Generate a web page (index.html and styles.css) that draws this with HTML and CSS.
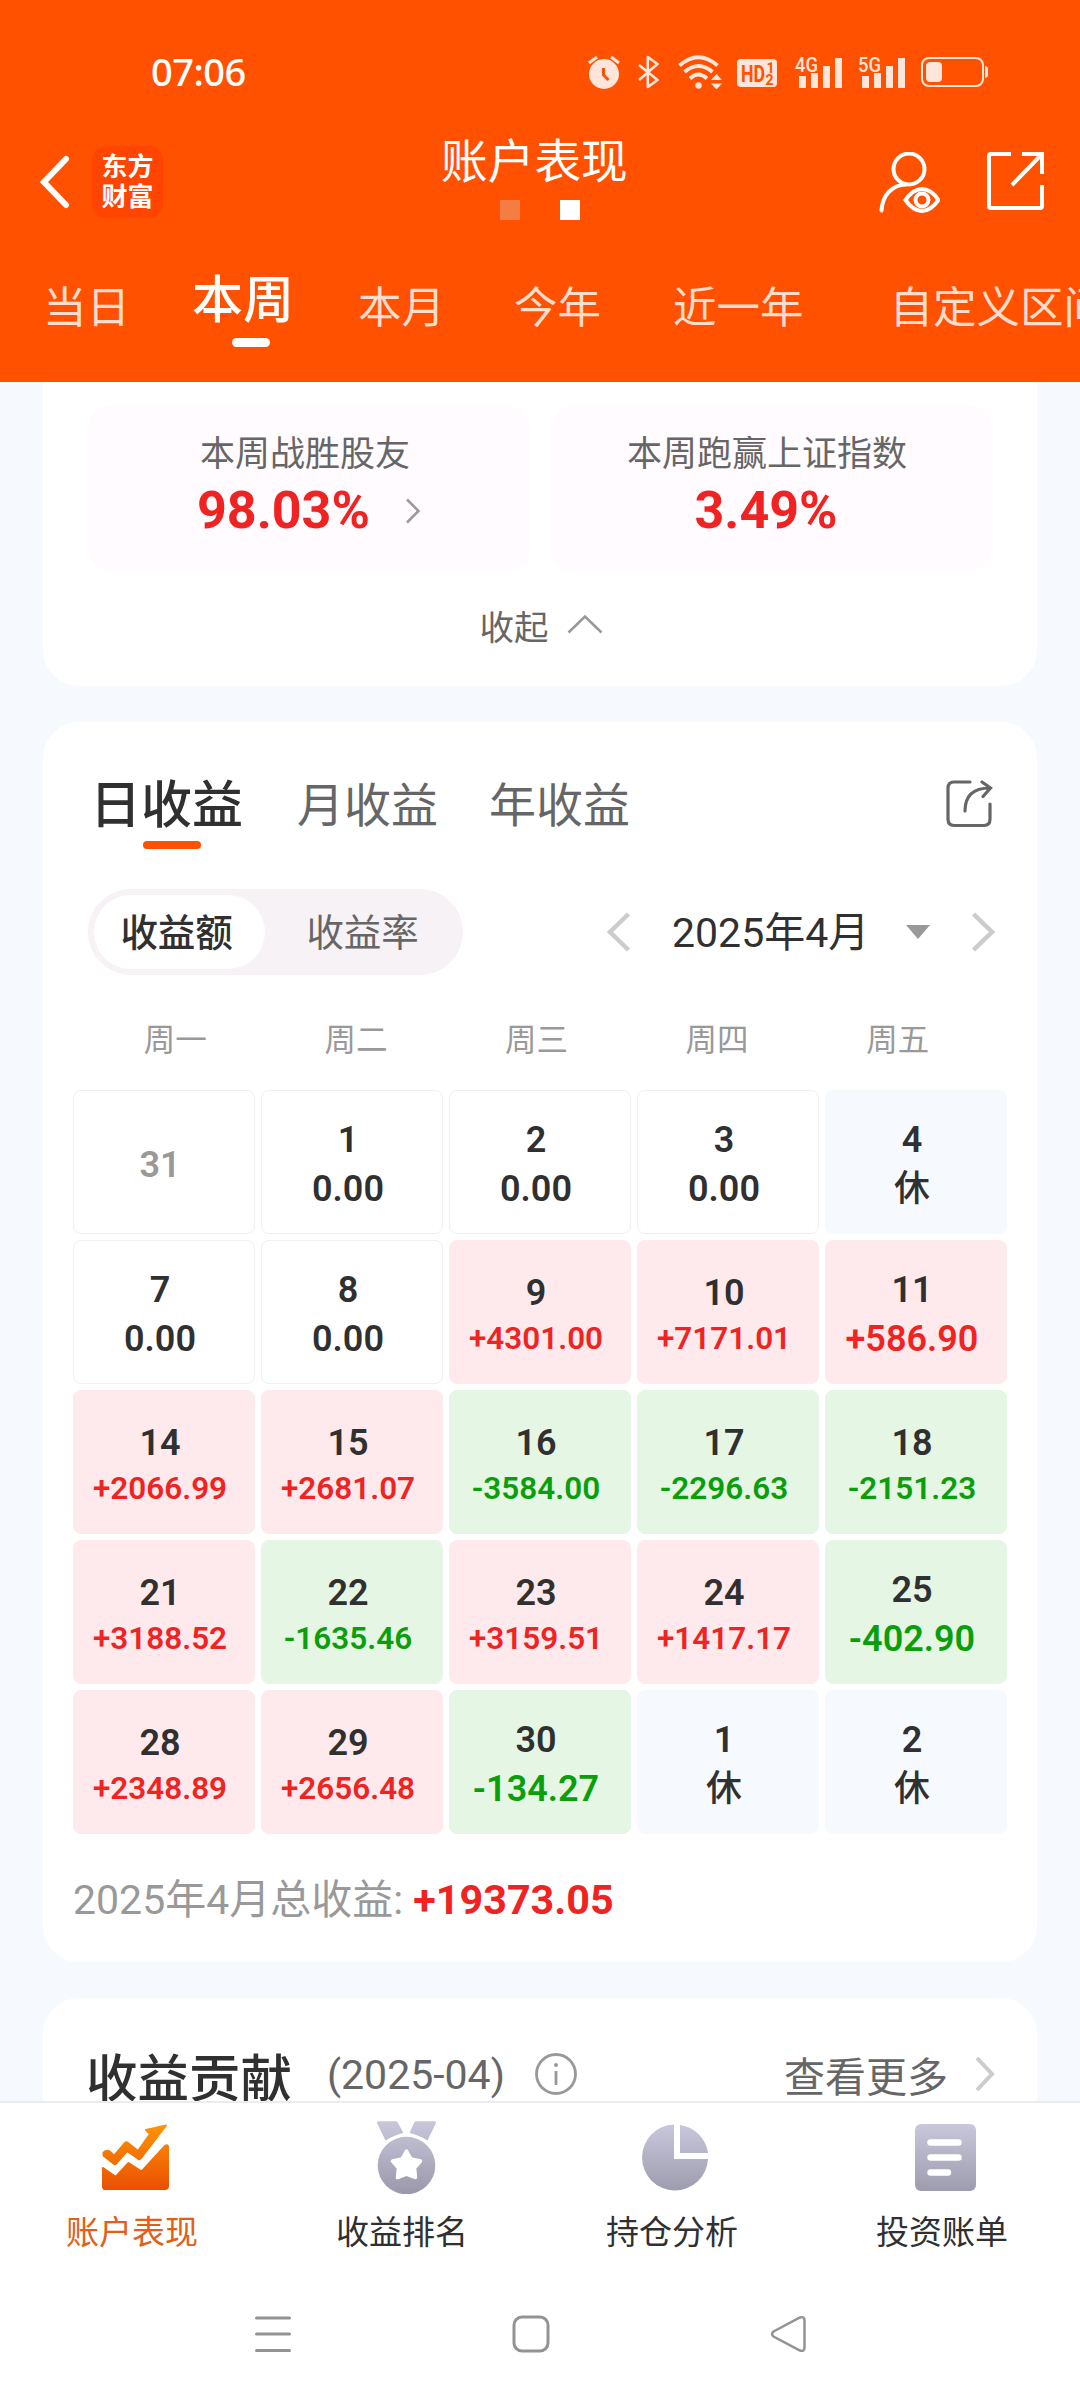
FILE: index.html
```html
<!DOCTYPE html>
<html lang="zh-CN">
<head>
    <meta charset="UTF-8">
    <meta name="viewport" content="width=device-width, initial-scale=1.0">
    <title>账户表现</title>
    <link rel="stylesheet" href="styles.css">
</head>
<body>
    <div class="phone">
        <header class="header">
            <div class="status-bar">
                <span class="time">07:06</span>
                <div class="status-icons">
                    <svg class="alarm" width="32" height="34" viewBox="0 0 32 34">
                        <circle cx="16" cy="19" r="15" fill="#ffe5da"/>
                        <path d="M1 8L9 2M31 8L23 2" stroke="#ffe5da" stroke-width="3"/>
                        <path d="M15.500 13v7l5 5" fill="none" stroke="#ff5100" stroke-width="3"/>
                    </svg>
                    <svg class="bluetooth" width="21" height="34" viewBox="0 0 21 34">
                        <path d="M1 10L19.500 25 9.800 32V2L19.500 9 1 25" fill="none" stroke="#ffe5da" stroke-width="2.600" stroke-linejoin="round"/>
                    </svg>
                    <svg class="wifi" width="44" height="34" viewBox="0 0 44 34">
                        <path d="M1.500 10.500Q20.500 -6 39.500 10.500M6.500 17Q20.500 5 34.500 17M12 23.500Q20.500 15.500 29 23.500" fill="none" stroke="#ffe5da" stroke-width="3.800"/>
                        <circle cx="20.500" cy="30.500" r="3.200" fill="#ffe5da"/>
                        <path d="M33 25l5.500-6 5.500 6zM33 28.500l5.500 6 5.500-6z" fill="#ffe5da"/>
                    </svg>
                    <svg class="hd" width="40" height="28" viewBox="0 0 40 28">
                        <rect width="40" height="28" rx="4" fill="#ffe5da"/>
                        <text x="4" y="22.500" font-size="23" textLength="24" lengthAdjust="spacingAndGlyphs">HD</text>
                        <text x="29.500" y="13.500" font-size="14">1</text>
                        <text x="28.500" y="25.500" font-size="14">2</text>
                    </svg>
                    <svg class="signal" width="48" height="34" viewBox="0 0 48 34">
                        <text x="0" y="16.500" font-size="21" textLength="23" lengthAdjust="spacingAndGlyphs">4G</text>
                        <path d="M4 21h7v12H4zM16 18h7v15h-7zM28 11h7v22h-7zM40 3h7v30h-7z" fill="#ffe5da"/>
                    </svg>
                    <svg class="signal" width="48" height="34" viewBox="0 0 48 34">
                        <text x="0" y="16.500" font-size="21" textLength="23" lengthAdjust="spacingAndGlyphs">5G</text>
                        <path d="M4 21h7v12H4zM16 18h7v15h-7zM28 11h7v22h-7zM40 3h7v30h-7z" fill="#ffe5da"/>
                    </svg>
                    <svg class="battery" width="67" height="30" viewBox="0 0 67 30">
                        <rect x="1" y="1" width="61" height="28" rx="7" fill="none" stroke="#ffe5da" stroke-width="2"/>
                        <rect x="5" y="5" width="16" height="20" rx="4" fill="#ffe5da"/>
                        <path d="M64 9q3 0 3 3v6q0 3-3 3z" fill="#ffe5da"/>
                    </svg>
                </div>
            </div>

            <div class="title-bar">
                <div class="title-left">
                    <svg width="30" height="54" viewBox="0 0 30 54">
                        <path d="M26 4L4 27 26 50" fill="none" stroke="#fff" stroke-width="6" stroke-linecap="round" stroke-linejoin="miter"/>
                    </svg>
                    <div class="logo">东方<br>财富</div>
                </div>
                <div class="title-center">
                    <h1>账户表现</h1>
                    <div class="dots"><i></i><i class="on"></i></div>
                </div>
                <div class="title-right">
                    <svg width="61" height="61" viewBox="0 0 61 61" fill="none" stroke="#fff" stroke-width="4" stroke-linecap="round">
                        <circle cx="30" cy="17" r="15.500"/>
                        <path d="M27 32.500C13 33 3.500 43 2.500 58.500"/>
                        <path d="M26.500 48Q34 37 43 37T59.500 48Q52 59 43 59T26.500 48z"/>
                        <circle cx="43" cy="48" r="6.500"/>
                    </svg>
                    <svg width="58" height="58" viewBox="0 0 58 58" fill="none" stroke="#fff" stroke-width="4">
                        <path d="M24 2H4Q2 2 2 4V54Q2 56 4 56H53Q55 56 55 54V33M35 2H55V22M55 2L25 33"/>
                    </svg>
                </div>
            </div>

            <nav class="periods">
                <span>当日</span>
                <span class="active">本周</span>
                <span>本月</span>
                <span>今年</span>
                <span>近一年</span>
                <span>自定义区间</span>
            </nav>
        </header>

        <main class="content">
            <section class="card summary">
                <div class="stats">
                    <div class="stat">
                        <div class="stat-label">本周战胜股友</div>
                        <div class="stat-value">98.03%
                            <svg width="16" height="26" viewBox="0 0 16 26"><path d="M2 1.500L13.500 13 2 24.500" fill="none" stroke="#999" stroke-width="2.500"/></svg>
                        </div>
                    </div>
                    <div class="stat">
                        <div class="stat-label">本周跑赢上证指数</div>
                        <div class="stat-value">3.49%</div>
                    </div>
                </div>
                <div class="collapse">收起
                    <svg width="36" height="20" viewBox="0 0 36 20"><path d="M1.500 18.500L18 2.500 34.500 18.500" fill="none" stroke="#999" stroke-width="2.500"/></svg>
                </div>
            </section>

            <section class="card earnings">
                <div class="earn-tabs">
                    <span class="active">日收益</span>
                    <span>月收益</span>
                    <span>年收益</span>
                    <svg width="47" height="48" viewBox="0 0 47 48" fill="none" stroke="#666" stroke-width="3.200" stroke-linecap="round">
                        <path d="M24 2H8Q2 2 2 8V39Q2 45.500 8 45.500H38Q44 45.500 44 39V24"/>
                        <path d="M19 31Q19 8 44 8M36 2L44.500 8 37 16.500"/>
                    </svg>
                </div>

                <div class="filter">
                    <div class="segment">
                        <span class="active">收益额</span>
                        <span>收益率</span>
                    </div>
                    <div class="month">
                        <svg width="24" height="40" viewBox="0 0 24 40"><path d="M21.500 2L3 20 21.500 38" fill="none" stroke="#ccc" stroke-width="4.500"/></svg>
                        <span class="month-text">2025年4月</span>
                        <svg class="down" width="24" height="14" viewBox="0 0 24 14"><path d="M0 0H24L12 14z" fill="#999"/></svg>
                        <svg width="24" height="40" viewBox="0 0 24 40"><path d="M2.500 2L21 20 2.500 38" fill="none" stroke="#ccc" stroke-width="4.500"/></svg>
                    </div>
                </div>

                <div class="weekdays">
                    <span>周一</span><span>周二</span><span>周三</span><span>周四</span><span>周五</span>
                </div>

                <div class="calendar">
                    <div class="day muted"><b>31</b></div>
                    <div class="day"><b>1</b><em>0.00</em></div>
                    <div class="day"><b>2</b><em>0.00</em></div>
                    <div class="day"><b>3</b><em>0.00</em></div>
                    <div class="day rest"><b>4</b><em>休</em></div>

                    <div class="day"><b>7</b><em>0.00</em></div>
                    <div class="day"><b>8</b><em>0.00</em></div>
                    <div class="day up small"><b>9</b><em>+4301.00</em></div>
                    <div class="day up small"><b>10</b><em>+7171.01</em></div>
                    <div class="day up"><b>11</b><em>+586.90</em></div>

                    <div class="day up small"><b>14</b><em>+2066.99</em></div>
                    <div class="day up small"><b>15</b><em>+2681.07</em></div>
                    <div class="day down small"><b>16</b><em>-3584.00</em></div>
                    <div class="day down small"><b>17</b><em>-2296.63</em></div>
                    <div class="day down small"><b>18</b><em>-2151.23</em></div>

                    <div class="day up small"><b>21</b><em>+3188.52</em></div>
                    <div class="day down small"><b>22</b><em>-1635.46</em></div>
                    <div class="day up small"><b>23</b><em>+3159.51</em></div>
                    <div class="day up small"><b>24</b><em>+1417.17</em></div>
                    <div class="day down"><b>25</b><em>-402.90</em></div>

                    <div class="day up small"><b>28</b><em>+2348.89</em></div>
                    <div class="day up small"><b>29</b><em>+2656.48</em></div>
                    <div class="day down"><b>30</b><em>-134.27</em></div>
                    <div class="day rest"><b>1</b><em>休</em></div>
                    <div class="day rest"><b>2</b><em>休</em></div>
                </div>

                <div class="total">2025年4月总收益: <strong>+19373.05</strong></div>
            </section>

            <section class="card contribution">
                <h2>收益贡献</h2>
                <span class="range">(2025-04)</span>
                <svg class="info" width="42" height="42" viewBox="0 0 42 42">
                    <circle cx="21" cy="21" r="19.500" fill="none" stroke="#999" stroke-width="2.800"/>
                    <path d="M21 18V32" stroke="#999" stroke-width="2.800"/>
                    <circle cx="21" cy="12" r="2" fill="#999"/>
                </svg>
                <span class="more">查看更多</span>
                <svg width="20" height="36" viewBox="0 0 20 36"><path d="M2 2L17 18 2 34" fill="none" stroke="#ccc" stroke-width="4"/></svg>
            </section>
        </main>

        <nav class="tabbar">
            <div class="tab active">
                <svg width="67" height="66" viewBox="0 0 67 66">
                    <defs>
                        <linearGradient id="orange" gradientUnits="userSpaceOnUse" x1="0" y1="0" x2="0" y2="66"><stop offset="0" stop-color="#ff9505"/><stop offset="1" stop-color="#ea4f00"/></linearGradient>
                    </defs>
                    <g fill="url(#orange)" stroke="url(#orange)" stroke-width="2" stroke-linejoin="round">
                        <path d="M4.500 27Q7 26 12 32L23 19Q24.500 17.500 26 19L36 27 48 10 44 6 64 1.500 39 34Q37.500 36 36 34.500L25 27 14 39.500Q12.500 41 11 39L2 32Q0 28 4.500 27z"/>
                        <path d="M1 44L12.500 52Q14 53 15 51.500L26.500 39 38 46.500Q39.500 47.500 41 46L63 22Q66 20 66 23V62Q66 65 63 65H3Q1 65 1 62z"/>
                    </g>
                </svg>
                <span>账户表现</span>
            </div>
            <div class="tab">
                <svg class="medal" width="59" height="73" viewBox="0 0 59 73">
                    <defs>
                        <linearGradient id="gray" gradientUnits="userSpaceOnUse" x1="0" y1="0" x2="0" y2="72"><stop offset="0" stop-color="#c9c7db"/><stop offset="1" stop-color="#9a98aa"/></linearGradient>
                    </defs>
                    <path d="M1 .300H20L26.500 12Q17 14 8.500 19.500L0 2Q0 .300 1 .300zM58 .300H39Q37.500 .300 37 2L32.500 12Q42 14 50.500 19.500L59 2Q59 .300 58 .300z" fill="url(#gray)"/>
                    <circle cx="29.500" cy="44.500" r="28.800" fill="url(#gray)"/>
                    <path d="M29.500 30L34 38 43.500 40 37.500 47 38.500 56.500 29.500 53 20.500 56.500 21.500 47 15.500 40 25 38z" fill="#fff" stroke="#fff" stroke-width="3.500" stroke-linejoin="round"/>
                </svg>
                <span>收益排名</span>
            </div>
            <div class="tab">
                <svg width="67" height="67" viewBox="0 0 67 67">
                    <path d="M32 .500A33 33 0 1 0 66 35H32zM38 1A33 33 0 0 1 66 29H38z" fill="url(#gray)"/>
                </svg>
                <span>持仓分析</span>
            </div>
            <div class="tab">
                <svg width="61" height="67" viewBox="0 0 61 67">
                    <rect width="61" height="67" rx="6" fill="url(#gray)"/>
                    <path d="M15.500 18.500H43.500M15.500 33.500H43.500M15.500 48.500H33" stroke="#fff" stroke-width="6.500" stroke-linecap="round"/>
                </svg>
                <span>投资账单</span>
            </div>
        </nav>

        <div class="sysbar">
            <svg width="38" height="38" viewBox="0 0 38 38" stroke="#939393" stroke-width="3" stroke-linecap="round"><path d="M2.500 3H35.500M2.500 19H35.500M2.500 35.500H35.500"/></svg>
            <svg width="38" height="38" viewBox="0 0 38 38" fill="none" stroke="#939393" stroke-width="3"><rect x="2" y="2" width="34" height="34" rx="8"/></svg>
            <svg width="38" height="38" viewBox="0 0 38 38" fill="none" stroke="#939393" stroke-width="2.500"><path d="M3.500 16.500L30 2.500Q34.500 1 34.500 5.500V32.500Q34.500 37 30 35.500L3.500 21.500Q.500 19 3.500 16.500z"/></svg>
        </div>
    </div>
</body>
</html>
```

FILE: styles.css
```css
:root {
    --orange: #ff5100;
    --red: #f02323;
    --green: #0a9f0a;
    --dark: #303030;
    --gray: #666;
    --light: #999;
}
* {
    box-sizing: border-box;
}
body {
    margin: 0;
    font-family: Roboto, "Noto Sans CJK SC", sans-serif;
    color: var(--dark);
    background: #fff;
}
svg {
    display: block;
    flex: none;
}
.phone {
    width: 1080px;
    height: 2400px;
    display: flex;
    flex-direction: column;
    overflow: hidden;
}

/* header */
.header {
    height: 382px;
    flex: none;
    background: var(--orange);
    color: #fff;
    overflow: hidden;
}
.status-bar {
    height: 134px;
    padding: 54px 92px 0 151px;
    display: flex;
    justify-content: space-between;
}
.time {
    margin-top: -2px;
    font-size: 38px;
    line-height: 38px;
    font-family: "Noto Sans", sans-serif;
    font-weight: 500;
    letter-spacing: -0.5px;
}
.status-icons {
    display: flex;
    align-items: center;
    height: 35px;
}
.status-icons text {
    font-family: Roboto, sans-serif;
    font-weight: 700;
}
.hd text {
    fill: var(--orange);
}
.signal text {
    fill: #ffe5da;
    font-weight: 500;
}
.bluetooth {
    margin-left: 18px;
}
.wifi {
    margin-left: 19px;
}
.hd {
    margin-left: 15px;
    margin-top: 3px;
}
.signal {
    margin-left: 18px;
    overflow: visible;
}
.signal + .signal {
    margin-left: 15px;
}
.battery {
    margin-left: 15px;
}
.title-bar {
    height: 116px;
    display: grid;
    grid-template-columns: 441px 187px 1fr;
}
.title-left {
    display: flex;
    padding: 12px 0 0 40px;
    gap: 22px;
}
.title-left svg {
    margin-top: 9px;
}
.logo {
    width: 71px;
    height: 72px;
    border-radius: 14px;
    background: #ff4500;
    font-size: 26px;
    line-height: 30px;
    font-weight: 700;
    text-align: center;
    padding-top: 6px;
}
.title-center h1 {
    margin: 0;
    padding-top: 1px;
    font-size: 46.7px;
    line-height: 54px;
    font-weight: 400;
    white-space: nowrap;
}
.dots {
    display: flex;
    gap: 40px;
    padding: 11px 0 0 59px;
}
.dots i {
    width: 20px;
    height: 20px;
    background: #f47d44;
}
.dots .on {
    background: #fff;
}
.title-right {
    display: flex;
    gap: 47px;
    padding: 18px 0 0 251px;
}
.periods {
    display: flex;
    align-items: flex-start;
    padding-left: 43px;
    font-size: 43.5px;
    line-height: 60px;
    color: #ffdccc;
    white-space: nowrap;
}
.periods span {
    margin: 29px 66px 0 0;
    flex: none;
}
.periods .active {
    margin: 21px 64px 0 -4px;
    font-size: 51px;
    font-weight: 500;
    color: #fff;
}
.periods .active::after {
    content: "";
    display: block;
    width: 38px;
    height: 9px;
    border-radius: 5px;
    background: #fff;
    margin: 7px 0 0 40px;
}
.periods span:nth-child(3) {
    margin-right: 69px;
}
.periods span:nth-child(4) {
    margin-right: 72px;
}
.periods span:nth-child(5) {
    margin-right: 86px;
}

/* cards */
.content {
    flex: none;
    height: 1719px;
    padding: 0 43px;
    background: #f6faff;
    overflow: hidden;
}
.card {
    background: #fff;
    border-radius: 36px;
    margin-bottom: 36px;
}
.summary {
    height: 304px;
    padding: 23px 45px 0;
    border-radius: 0 0 36px 36px;
}
.stats {
    display: grid;
    grid-template-columns: 442px 441px;
    gap: 21px;
}
.stat {
    height: 167px;
    border-radius: 24px;
    background: #fffbff;
    text-align: center;
    padding-top: 25px;
}
.stat-label {
    font-size: 35px;
    line-height: 50px;
    color: var(--gray);
    padding-right: 8px;
}
.stat:nth-child(2) .stat-label {
    padding-right: 9px;
}
.stat:nth-child(2) .stat-value {
    padding-right: 11px;
}
.stat-value {
    display: flex;
    justify-content: center;
    align-items: center;
    gap: 35px;
    font-size: 52px;
    line-height: 62px;
    font-weight: 700;
    color: var(--red);
}
.stat:first-child .stat-value {
    justify-content: flex-start;
    padding-left: 109px;
}
.collapse {
    display: flex;
    justify-content: center;
    align-items: center;
    gap: 18px;
    margin: 31px 0 0 2px;
    font-size: 34.5px;
    line-height: 50px;
    color: var(--gray);
}
.collapse svg {
    margin-top: -9px;
}

/* earnings calendar */
.earnings {
    height: 1240px;
    padding: 0 30px;
}
.earn-tabs {
    display: flex;
    height: 167px;
    padding: 54px 0 0 17px;
    font-size: 47px;
    line-height: 60px;
    color: var(--gray);
}
.earn-tabs span {
    margin-right: 51px;
}
.earn-tabs .active {
    margin-right: 54px;
    font-size: 51px;
    font-weight: 500;
    color: var(--dark);
}
.earn-tabs .active::after {
    content: "";
    display: block;
    width: 58px;
    height: 8px;
    border-radius: 4px;
    background: var(--orange);
    margin: 5px 0 0 53px;
}
.earn-tabs svg {
    margin: 4px 14px 0 auto;
}
.filter {
    display: flex;
    justify-content: space-between;
    align-items: center;
    padding: 0 12px 0 15px;
}
.segment {
    display: flex;
    width: 375px;
    height: 86px;
    padding: 6px;
    border-radius: 43px;
    background: #f6f2f6;
    font-size: 37.5px;
    line-height: 77px;
    color: var(--gray);
}
.segment span {
    width: 175px;
    text-align: center;
}
.segment span:last-child {
    width: 196px;
    padding-left: 3px;
}
.segment .active {
    padding-right: 6px;
    border-radius: 37px;
    background: #fff;
    color: var(--dark);
    font-weight: 500;
}
.month {
    display: flex;
    align-items: center;
}
.month-text {
    margin-left: 41px;
    padding-top: 2px;
    width: 199px;
    font-size: 41px;
    line-height: 60px;
    white-space: nowrap;
}
.month .down {
    margin: 0 41px 0 35px;
}
.weekdays {
    display: flex;
    padding: 41px 0 25px 12px;
    font-size: 31.5px;
    line-height: 49px;
    color: var(--light);
}
.weekdays span {
    width: 180.6px;
    text-align: center;
}
.calendar {
    display: grid;
    grid-template-columns: repeat(5, 182px);
    grid-auto-rows: 144px;
    gap: 6px;
}
.day {
    display: flex;
    flex-direction: column;
    align-items: center;
    padding: 25px 8px 0 0;
    border-radius: 8px;
    font-size: 36px;
    line-height: 49px;
    font-weight: 600;
    border: 1px solid #efeff1;
}
.day b {
    font-weight: 600;
}
.day em {
    font-style: normal;
}
.day.small {
    padding-top: 28px;
}
.day.small em {
    font-size: 31.5px;
    line-height: 41px;
}
.day.up {
    background: #feeaed;
    border-color: #feeaed;
}
.day.up em {
    color: var(--red);
}
.day.down {
    background: #e5f6e5;
    border-color: #e5f6e5;
}
.day.down em {
    color: var(--green);
}
.day.rest {
    background: #f6faff;
    border-color: #f6faff;
}
.day.rest em {
    font-weight: 500;
}
.day.muted {
    padding-top: 50px;
    color: var(--light);
}
.total {
    margin-top: 36px;
    font-size: 41px;
    line-height: 60px;
    color: var(--light);
}
.total strong {
    font-size: 41.3px;
    color: var(--red);
}

.contribution {
    display: flex;
    align-items: center;
    height: 160px;
    padding: 0 42px 8px 43px;
    font-size: 41px;
    color: var(--gray);
}
.contribution h2 {
    margin: 0 35px 0 0;
    font-size: 51.5px;
    font-weight: 500;
    color: var(--dark);
}
.range {
    padding-top: 2px;
}
.info {
    margin-left: 30px;
}
.more {
    margin: 0 27px 0 auto;
}

/* bottom navigation */
.tabbar {
    display: grid;
    grid-template-columns: repeat(4, 270px);
    height: 170px;
    flex: none;
    border-top: 2px solid #ececf0;
    background: #fff;
}
.tab {
    display: flex;
    flex-direction: column;
    align-items: center;
    padding-top: 21px;
    font-size: 33px;
    line-height: 48px;
}
.tab svg {
    margin-bottom: 18px;
}
.tab svg[height="66"] {
    margin-bottom: 19px;
}
.tab .medal {
    margin: -3px 0 15px 2px;
}
.tab span {
    margin-right: 6px;
}
.tab.active {
    color: #e06018;
}
.sysbar {
    display: flex;
    justify-content: space-between;
    padding: 44px 272px 0 254px;
}
```
